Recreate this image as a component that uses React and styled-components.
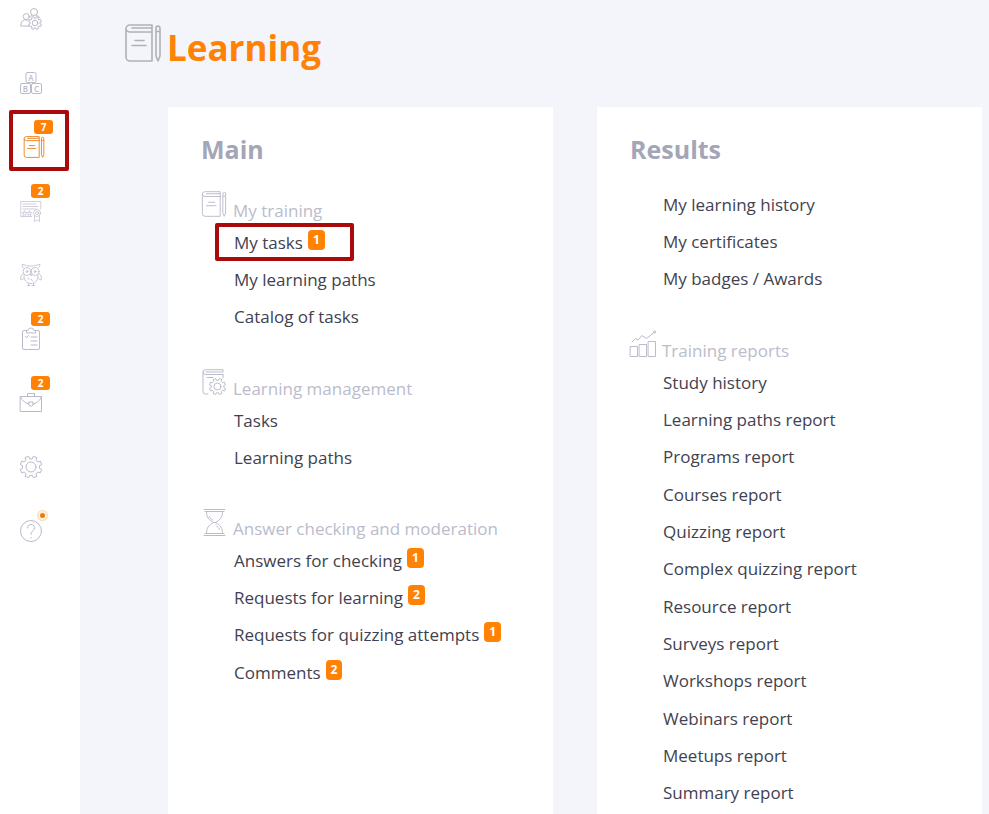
import React from 'react';
import styled, { createGlobalStyle, css } from 'styled-components';

const GlobalStyles = createGlobalStyle`
  * {
    box-sizing: border-box;
  }

  body {
    margin: 0;
    background: #f4f5fa;
    color: #3f4250;
    font-family: 'Open Sans', 'Segoe UI', sans-serif;
    font-size: 17px;
  }

  a {
    color: inherit;
    text-decoration: none;
  }

  ul {
    margin: 0;
    padding: 0;
    list-style: none;
  }
`;

const Layout = styled.div`
  display: flex;
  min-height: 100vh;
`;

const Sidebar = styled.nav`
  flex: 0 0 80px;
  padding-top: 8px;
  background: #fff;
`;

const NavItem = styled.li`
  height: 64px;
  padding-left: ${({ $active }) => ($active ? 23 : 20)}px;
`;

const NavLink = styled.a`
  position: relative;
  display: inline-block;
  color: ${({ $active }) => ($active ? '#f08a2c' : '#b9bacb')};
`;

const Icon = styled.svg`
  display: block;
  width: ${({ $size }) => $size}px;
  height: ${({ $size }) => $size}px;
  overflow: visible;
  fill: none;
  stroke: currentColor;
  stroke-width: ${({ $stroke }) => $stroke || 1};
  stroke-linecap: round;
  stroke-linejoin: round;
`;

const badge = css`
  background: #ff8205;
  color: #fff;
  font-weight: 700;
  text-align: center;
`;

const NavBadge = styled.span`
  ${badge}
  position: absolute;
  top: -16px;
  left: 11px;
  width: 19px;
  height: 14px;
  border-radius: 3px;
  font-size: 10px;
  line-height: 14px;
`;

const NavDot = styled.span`
  position: absolute;
  top: -9px;
  left: 18px;
  width: 9px;
  height: 9px;
  border: 2px solid #fff0dc;
  border-radius: 50%;
  background: #e87c17;
  box-shadow: 0 0 0 1px #fbdcb8;
`;

const Frame = styled.span`
  position: absolute;
  border: 4px solid #ab0a0a;
  border-radius: 2px;
  pointer-events: none;
`;

const NavFrame = styled(Frame)`
  top: -26px;
  left: -14px;
  width: 60px;
  height: 61px;
`;

const LinkFrame = styled(Frame)`
  top: -1px;
  left: -19px;
  width: 139px;
  height: 38px;
`;

const Main = styled.main`
  display: flex;
  flex: 1;
  flex-direction: column;
  min-width: 0;
`;

const Header = styled.header`
  display: flex;
  align-items: flex-start;
  gap: 5px;
  height: 107px;
  padding: 24px 44px 0;
  color: #b0b1b8;
`;

const Title = styled.h1`
  margin: 0;
  color: #ff8205;
  font-size: 35px;
  font-weight: 700;
  line-height: 48px;
`;

const Cards = styled.div`
  display: grid;
  flex: 1;
  grid-template-columns: 1fr 1fr;
  gap: 44px;
  padding: 0 7px 0 88px;
`;

const Card = styled.section`
  padding: 24px 33px 0;
  background: #fff;
`;

const CardTitle = styled.h2`
  margin: 0;
  color: #a4a6b8;
  font-size: 25px;
  font-weight: 700;
  line-height: 36px;
`;

const Groups = styled.div`
  display: flex;
  flex-direction: column;
  gap: 28px;
  padding-top: 19px;
`;

const GroupHead = styled.h3`
  display: flex;
  align-items: flex-start;
  gap: 6px;
  height: 38px;
  margin: 0;
  padding-top: 5px;
  color: #bbbccb;
  font-size: 17px;
  font-weight: 400;
`;

const GroupName = styled.span`
  padding-top: 7px;
  line-height: 26px;
`;

const LinkRow = styled.li`
  position: relative;
  display: flex;
  gap: 5px;
  height: 37px;
  margin-left: 33px;
  line-height: 37px;
  white-space: nowrap;

  &:nth-child(3n) {
    height: 38px;
    line-height: 38px;
  }
`;

const Badge = styled.span`
  ${badge}
  height: 20px;
  margin-top: 6px;
  padding: 0 5px;
  border-radius: 4px;
  font-size: 12px;
  line-height: 20px;
`;

// outline of a cog with n teeth round (cx, cy)
const cogPath = (cx, cy, inner, outer, n = 8) => {
  const step = (Math.PI * 2) / n;
  const at = (r, a) => `${(cx + r * Math.cos(a)).toFixed(2)} ${(cy + r * Math.sin(a)).toFixed(2)}`;
  const parts = [];
  for (let i = 0; i < n; i++) {
    const a = i * step - Math.PI / 2 + step / 2;
    parts.push(at(inner, a - step * 0.3), at(outer, a - step * 0.22), at(outer, a + step * 0.22), at(inner, a + step * 0.3));
  }
  return `M${parts.join('L')}Z`;
};

const UsersIcon = (props) => (
  <Icon viewBox="0 0 22 22" {...props}>
    <circle cx="14" cy="4" r="3.5" />
    <circle cx="6.3" cy="8.5" r="3" />
    <path d="M9 18H.8c0-3 1.2-5.5 3.8-6.3 1 .9 2.5.9 3.5 0M9.5 9.5c.5-1 1.2-1.7 2.2-2M16.5 7.5c1.5.3 2.7 1.1 3.3 2.300" />
    <path d={cogPath(15, 15, 5, 6.6)} />
    <circle cx="15" cy="15" r="2.8" />
  </Icon>
);

const blockLabel = { fontSize: 8, fontWeight: 600, textAnchor: 'middle', fill: 'currentColor', stroke: 'none' };

const BlocksIcon = (props) => (
  <Icon viewBox="0 0 22 22" {...props}>
    <rect x="6" y=".5" width="10" height="10" rx="1.5" />
    <rect x=".5" y="11.5" width="10" height="10" rx="1.5" />
    <rect x="11.5" y="11.5" width="10" height="10" rx="1.5" />
    <text x="11" y="8.500" {...blockLabel}>A</text>
    <text x="5.5" y="19.500" {...blockLabel}>B</text>
    <text x="16.5" y="19.500" {...blockLabel}>C</text>
  </Icon>
);

const BookIcon = (props) => (
  <Icon viewBox="0 0 36 38" {...props}>
    <path d="M27 8H5a4 3.5 0 0 1 0-7h22v3H7M27 8v29H5a4 4 0 0 1-4-4V4.5M27 4v4" />
    <path d="M10 16.5h9M7 21.5h14M31 4.5a2 2.5 0 0 1 4 0V32l-2 5-2-5zM31 7.5h4" />
  </Icon>
);

const CertificateIcon = (props) => (
  <Icon viewBox="0 0 22 22" {...props}>
    <path d="M11.5 16.500H.8V1.500h20v7.500M3 4h13M3 6.500h15M3 9h13" />
    <path d="m4.500 11 .7 1.500 1.600.2-1.200 1.100.3 1.700-1.400-.8-1.400.8.3-1.700-1.200-1.100 1.600-.2zM9.500 11l.7 1.500 1.600.2-1.200 1.100.3 1.700-1.400-.8-1.400.8.3-1.700-1.200-1.100 1.600-.2z" />
    <circle cx="17" cy="13" r="3.5" />
    <circle cx="17" cy="13" r="1.5" />
    <path d="M14.500 16v5.500l2.500-1.500 2.500 1.500V16" />
  </Icon>
);

const OwlIcon = (props) => (
  <Icon viewBox="0 0 22 22" {...props}>
    <path d="M3.500 4C2.500 3 2 1.500 2 .5c3 0 4 1.500 9 1.500s6-1.500 9-1.500c0 1-.5 2.500-1.500 3.500" />
    <circle cx="7" cy="7.500" r="4" />
    <circle cx="15" cy="7.500" r="4" />
    <circle cx="7" cy="7.500" r="1" />
    <circle cx="15" cy="7.500" r="1" />
    <path d="m10 10 1 2 1-2M4 11c-.5 5 2.500 8.500 7 8.500s7.500-3.500 7-8.500M3 9.500c-2 1.500-3 4-2 6.500 1.500-.2 2.500-1 3-2M19 9.500c2 1.500 3 4 2 6.500-1.500-.2-2.500-1-3-2M8 14l1 1.500M11 15l1.500 2M7.500 21.500h2.500M12 21.500h2.500M8.500 19.500v2M13.500 19.500v2" />
  </Icon>
);

const ClipboardIcon = (props) => (
  <Icon viewBox="0 0 22 22" {...props}>
    <path d="M6.500 2.500H4a1.500 1.500 0 0 0-1.500 1.500v16A1.500 1.500 0 0 0 4 21.500h14a1.500 1.500 0 0 0 1.500-1.500V4A1.500 1.500 0 0 0 18 2.500h-2.500" />
    <path d="M6.500 4.500v-2l2-.5a2.500 2 0 0 1 5 0l2 .5v2zM5.500 8.500l1 1.200 2-2.200M11 9h6M11 13h6M11 17h6" />
  </Icon>
);

const BriefcaseIcon = (props) => (
  <Icon viewBox="0 0 22 22" {...props}>
    <path d="M.5 4.500h21v15H.5zM7.500 4.500v-3h7v3M.5 5c2 4 5 6.500 8.500 7M21.500 5c-2 4-5 6.500-8.500 7M9 10h4v3l-2 1.500L9 13z" />
  </Icon>
);

const GearIcon = (props) => (
  <Icon viewBox="0 0 22 22" {...props}>
    <path d={cogPath(11, 11, 8.5, 11)} />
    <circle cx="11" cy="11" r="5" />
  </Icon>
);

const HelpIcon = (props) => (
  <Icon viewBox="0 0 22 22" {...props}>
    <circle cx="11" cy="11" r="10.500" />
    <path d="M7.500 8a3.500 3.500 0 1 1 5.500 2.700c-1.300 1-2 1.800-2 3.800M11 17.300v.7" />
  </Icon>
);

const BookCogIcon = (props) => (
  <Icon viewBox="0 0 26 26" {...props}>
    <path d="M22 5.500H4.500a2.500 2.400 0 0 1 0-4.800H22V3H5M22 5.500V9M2 3v19.500A2.500 2.500 0 0 0 4.500 25H7M6 8.500h6" />
    <path d={cogPath(16.5, 17.5, 6.4, 8.2)} />
    <circle cx="16.5" cy="17.5" r="3.5" />
  </Icon>
);

const HourglassIcon = (props) => (
  <Icon viewBox="0 0 26 26" {...props}>
    <path d="M3 .5h21M4 2.500h19M3 26.500h21M4 24.500h19M5.500 2.500c0 6 2 8 7 11-5 3-7 5-7 11M21.500 2.500c0 6-2 8-7 11 5 3 7 5 7 11M8 7.500c.8 1.500 2 2.500 3.500 3.500M15.500 17c1.500 1 2.500 2 3 3.500M12.500 13.500h2" />
  </Icon>
);

const ChartIcon = (props) => (
  <Icon viewBox="0 0 26 26" {...props}>
    <path d="M.5 15.500h7v10h-7zM9.500 13.500h7v12h-7zM18.500 10.500h7v15h-7z" />
    <path d="m2 11 3.500-3.500L8 9l4-4.500 4.500 3L24 1.500" />
    <circle cx="24.500" cy="1" r="1" />
  </Icon>
);

const navItems = [
  { name: 'Users', icon: UsersIcon },
  { name: 'Catalogs', icon: BlocksIcon },
  { name: 'Learning', icon: BookIcon, count: 7, active: true },
  { name: 'Certificates', icon: CertificateIcon, count: 2, stroke: 0.7 },
  { name: 'Knowledge', icon: OwlIcon, stroke: 0.8 },
  { name: 'Assessment', icon: ClipboardIcon, count: 2 },
  { name: 'Work', icon: BriefcaseIcon, count: 2 },
  { name: 'Settings', icon: GearIcon },
  { name: 'Help', icon: HelpIcon, dot: true },
];

const cards = [
  {
    title: 'Main',
    groups: [
      {
        name: 'My training',
        icon: BookIcon,
        stroke: 1.4,
        links: [{ text: 'My tasks', count: 1, framed: true }, { text: 'My learning paths' }, { text: 'Catalog of tasks' }],
      },
      {
        name: 'Learning management',
        icon: BookCogIcon,
        links: [{ text: 'Tasks' }, { text: 'Learning paths' }],
      },
      {
        name: 'Answer checking and moderation',
        icon: HourglassIcon,
        links: [
          { text: 'Answers for checking', count: 1 },
          { text: 'Requests for learning', count: 2 },
          { text: 'Requests for quizzing attempts', count: 1 },
          { text: 'Comments', count: 2 },
        ],
      },
    ],
  },
  {
    title: 'Results',
    groups: [
      {
        links: [{ text: 'My learning history' }, { text: 'My certificates' }, { text: 'My badges / Awards' }],
      },
      {
        name: 'Training reports',
        icon: ChartIcon,
        links: [
          { text: 'Study history' },
          { text: 'Learning paths report' },
          { text: 'Programs report' },
          { text: 'Courses report' },
          { text: 'Quizzing report' },
          { text: 'Complex quizzing report' },
          { text: 'Resource report' },
          { text: 'Surveys report' },
          { text: 'Workshops report' },
          { text: 'Webinars report' },
          { text: 'Meetups report' },
          { text: 'Summary report' },
        ],
      },
    ],
  },
];

const Group = ({ name, icon: GroupIcon, stroke, links }) => (
  <div>
    {name && (
      <GroupHead>
        <GroupIcon $size={26} $stroke={stroke} aria-hidden="true" />
        <GroupName>{name}</GroupName>
      </GroupHead>
    )}
    <ul>
      {links.map(({ text, count, framed }) => (
        <LinkRow key={text}>
          <a href="#">{text}</a>
          {count && <Badge>{count}</Badge>}
          {framed && <LinkFrame />}
        </LinkRow>
      ))}
    </ul>
  </div>
);

const App = () => (
  <Layout>
    <GlobalStyles />
    <Sidebar aria-label="Sections">
      <ul>
        {navItems.map(({ name, icon: ItemIcon, count, dot, active, stroke = 1 }) => (
          <NavItem key={name} $active={active}>
            <NavLink href="#" aria-label={name} $active={active}>
              <ItemIcon $size={22} $stroke={active ? 1.7 : stroke} aria-hidden="true" />
              {count && <NavBadge>{count}</NavBadge>}
              {dot && <NavDot />}
              {active && <NavFrame />}
            </NavLink>
          </NavItem>
        ))}
      </ul>
    </Sidebar>
    <Main>
      <Header>
        <BookIcon $size={38} $stroke={1.6} aria-hidden="true" />
        <Title>Learning</Title>
      </Header>
      <Cards>
        {cards.map(({ title, groups }) => (
          <Card key={title}>
            <CardTitle>{title}</CardTitle>
            <Groups>
              {groups.map((group, i) => (
                <Group key={i} {...group} />
              ))}
            </Groups>
          </Card>
        ))}
      </Cards>
    </Main>
  </Layout>
);

export default App;
